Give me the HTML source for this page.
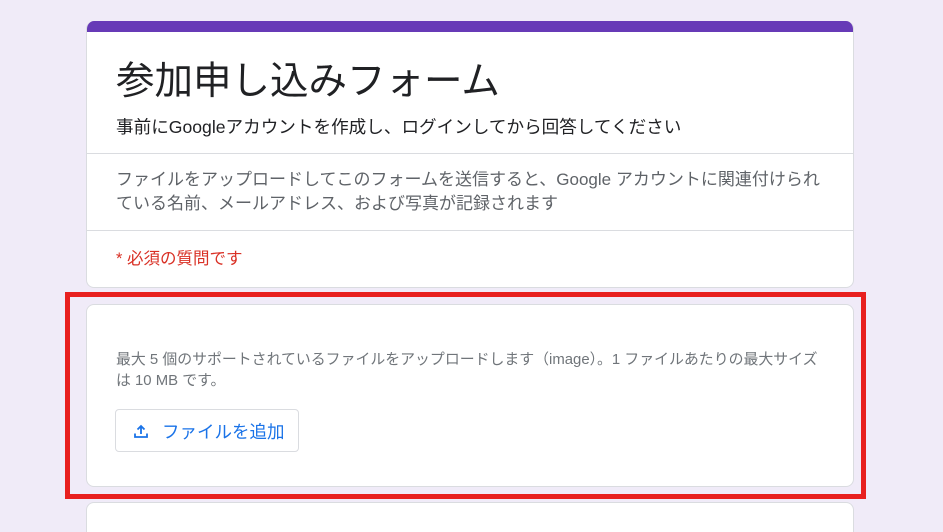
<!DOCTYPE html>
<html><head><meta charset="utf-8"><style>
*{margin:0;padding:0;box-sizing:border-box}
html,body{width:943px;height:532px;overflow:hidden}
body{background:#f0ebf8;font-family:"Liberation Sans","Noto Sans CJK JP",sans-serif;position:relative}
.card{position:absolute;left:86px;width:768px;background:#fff;border:1px solid #dadce0;border-radius:8px;overflow:hidden}
.t{position:absolute;white-space:nowrap}
</style></head><body>
<div class="card" style="top:21px;height:267px;border-top:none">
  <div style="height:11px;background:#673ab7"></div>
  <div class="t" style="left:29px;top:29px;font-size:38.5px;color:#202124">参加申し込みフォーム</div>
  <div class="t" style="left:29px;top:93px;font-size:17.6px;color:#202124">事前にGoogleアカウントを作成し、ログインしてから回答してください</div>
  <div style="position:absolute;left:0;right:0;top:132px;border-top:1px solid #dadce0"></div>
  <div class="t" style="left:29px;top:147px;font-size:17px;line-height:24px;color:#5f6368">ファイルをアップロードしてこのフォームを送信すると、Google アカウントに関連付けられ<br>ている名前、メールアドレス、および写真が記録されます</div>
  <div style="position:absolute;left:0;right:0;top:209px;border-top:1px solid #dadce0"></div>
  <div class="t" style="left:29px;top:224px;font-size:16.5px;color:#d93025">* 必須の質問です</div>
</div>
<div style="position:absolute;left:65px;top:292px;width:801px;height:207px;border:5px solid #e8201f"></div>
<div class="card" style="top:304px;height:183px">
  <div class="t" style="left:29px;top:45px;font-size:14.9px;line-height:21px;color:#70757a">最大 5 個のサポートされているファイルをアップロードします（image）。1 ファイルあたりの最大サイズ<br>は 10 MB です。</div>
  <div style="position:absolute;left:28px;top:104px;width:184px;height:43px;border:1px solid #dadce0;border-radius:4px">
    <svg style="position:absolute;left:17px;top:13px" width="16" height="16" viewBox="0 0 16 16"><path d="M8 11V3M4.5 6.5L8 3l3.5 3.5M2 10.5V14h12v-3.5" fill="none" stroke="#1a73e8" stroke-width="1.8"/></svg>
    <div class="t" style="left:46px;top:9px;font-size:17.5px;color:#1a73e8">ファイルを追加</div>
  </div>
</div>
<div class="card" style="top:502px;height:30px;border-bottom:none;border-radius:8px 8px 0 0"></div>
</body></html>
